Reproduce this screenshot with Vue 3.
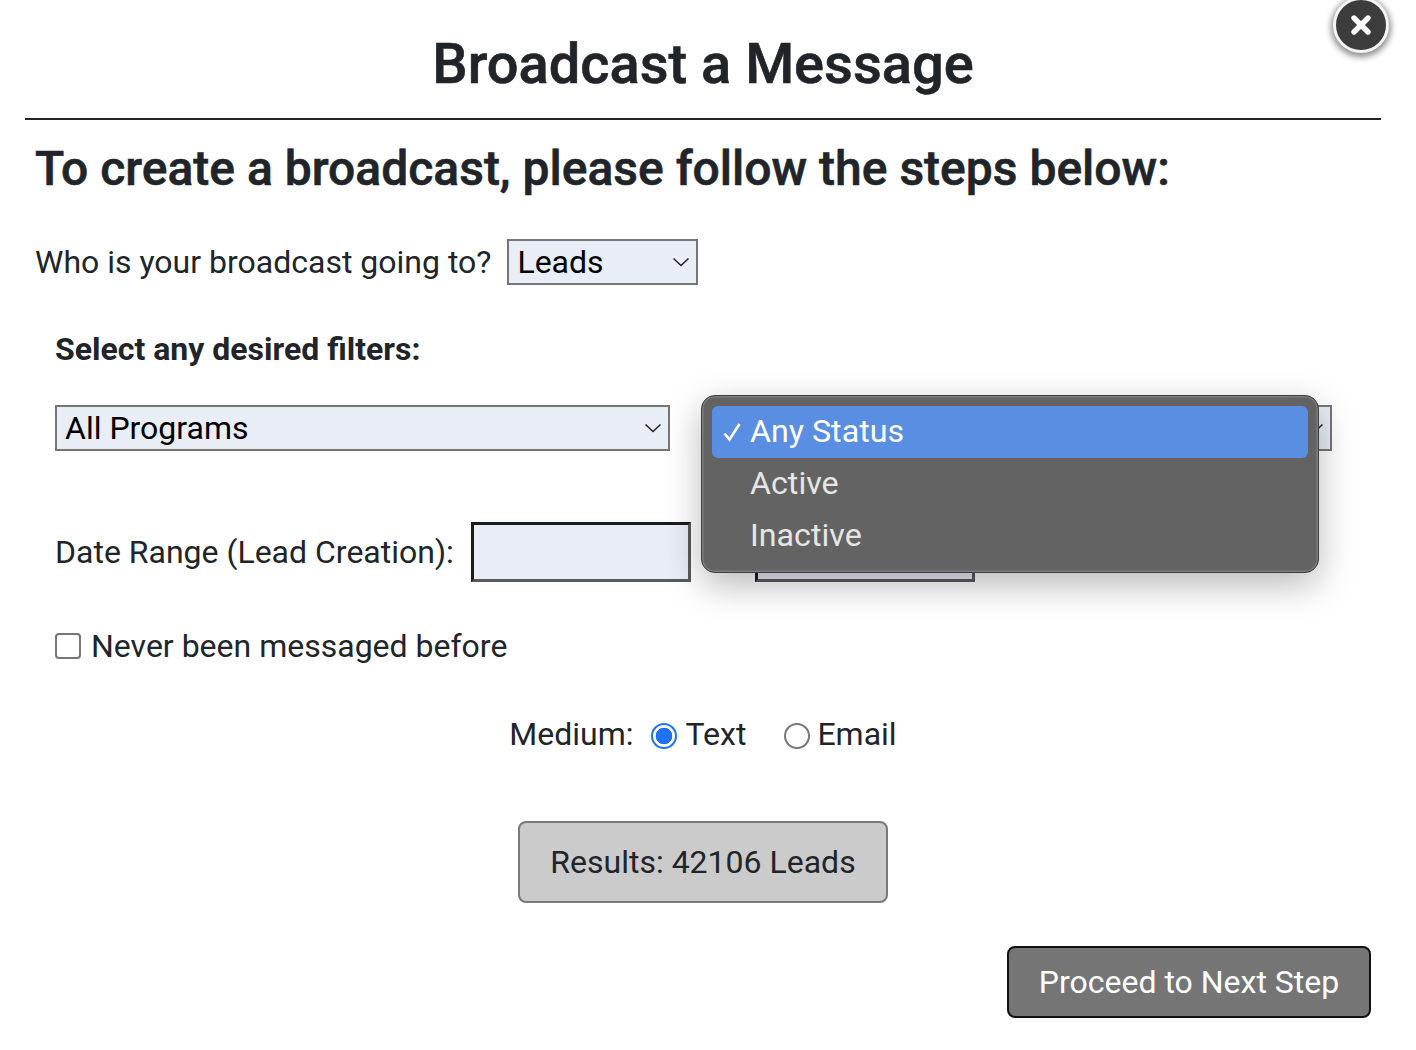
<script setup>
const options = [
  { label: 'Any Status', selected: true },
  { label: 'Active', selected: false },
  { label: 'Inactive', selected: false },
]
</script>

<template>
  <div class="modal">
    <button class="close" aria-label="Close">
      <svg width="26" height="26" viewBox="0 0 26 26">
        <path d="M6 6L20 20M20 6L6 20" stroke="#fff" stroke-width="5.4" stroke-linecap="round" />
      </svg>
    </button>

    <h1 class="title">Broadcast a Message</h1>
    <hr class="rule" />
    <h2 class="subtitle">To create a broadcast, please follow the steps below:</h2>

    <div class="audience">
      <span>Who is your broadcast going to?</span>
      <div class="select select-audience">
        <span>Leads</span>
        <svg class="chevron" width="18" height="10" viewBox="0 0 18 10"><path d="M1.5 1.5L9 8.5L16.5 1.5" fill="none" stroke="#222" stroke-width="1.5" /></svg>
      </div>
    </div>

    <section class="filters">
      <h3 class="filters-title">Select any desired filters:</h3>
      <div class="select-row">
        <div class="select select-program">
          <span>All Programs</span>
          <svg class="chevron" width="18" height="10" viewBox="0 0 18 10"><path d="M1.5 1.5L9 8.5L16.5 1.5" fill="none" stroke="#222" stroke-width="1.5" /></svg>
        </div>
        <div class="select select-status">
          <svg class="chevron" width="18" height="10" viewBox="0 0 18 10"><path d="M1.5 1.5L9 8.5L16.5 1.5" fill="none" stroke="#222" stroke-width="1.5" /></svg>
        </div>
      </div>
      <div class="date-row">
        <span class="date-label">Date Range (Lead Creation):</span>
        <input class="date" type="text" />
        <input class="date date-end" type="text" />
      </div>
      <label class="never">
        <span class="checkbox"></span>
        <span>Never been messaged before</span>
      </label>
    </section>

    <div class="medium">
      <span class="medium-label">Medium:</span>
      <span class="radio radio-on"></span>
      <span class="radio-text">Text</span>
      <span class="radio radio-off"></span>
      <span class="radio-text radio-text-last">Email</span>
    </div>

    <div class="results-wrap">
      <button class="results">Results: 42106 Leads</button>
    </div>
    <div class="next-wrap">
      <button class="next">Proceed to Next Step</button>
    </div>

    <ul class="menu">
      <li v-for="o in options" :key="o.label" class="menu-item" :class="{ active: o.selected }">
        <svg v-if="o.selected" class="tick" width="18" height="20" viewBox="0 0 18 20"><path d="M1.5 11.5L6.5 17.5L16.5 2" fill="none" stroke="#fff" stroke-width="2.6" /></svg>
        {{ o.label }}
      </li>
    </ul>
  </div>
</template>

<style>
html, body { margin: 0; background: #fff; }
</style>

<style scoped>
.modal {
  position: relative;
  box-sizing: border-box;
  width: 1416px;
  height: 1050px;
  padding: 0 35px 0 25px;
  overflow: hidden;
  font-family: Roboto, "Liberation Sans", sans-serif;
  font-size: 32px;
  line-height: 38px;
  color: #212529;
  background: #fff;
}
.close {
  position: absolute;
  top: -3px;
  left: 1333px;
  width: 56px;
  height: 56px;
  padding: 0;
  display: flex;
  align-items: center;
  justify-content: center;
  box-sizing: border-box;
  border: 3px solid #f4f4f4;
  border-radius: 50%;
  background: #3c3c3c;
  box-shadow: 0 2px 6px 2px rgba(0, 0, 0, 0.45);
  filter: blur(0.6px);
}
.title {
  margin: 0;
  padding-top: 32px;
  height: 118px;
  box-sizing: border-box;
  text-align: center;
  font-size: 56px;
  line-height: 64px;
  font-weight: 500;
  -webkit-text-stroke: 0.6px #212529;
  width: 1356px;
}
.rule {
  margin: 0;
  width: 1356px;
  height: 2px;
  border: 0;
  background: #212529;
}
.subtitle {
  margin: 22px 0 0 10px;
  font-size: 48px;
  line-height: 54px;
  font-weight: 500;
  -webkit-text-stroke: 0.6px #212529;
}
.audience {
  margin: 43px 0 0 10px;
  display: flex;
  align-items: center;
  gap: 16px;
}
.select {
  position: relative;
  box-sizing: border-box;
  height: 46px;
  display: flex;
  align-items: center;
  padding-left: 8px;
  border: 2px solid #767676;
  background: #e9edf6;
  color: #000;
}
.chevron {
  position: absolute;
  right: 6px;
  top: 16px;
}
.select-audience { width: 191px; }
.filters {
  margin: 45px 0 0 30px;
}
.filters-title {
  margin: 0;
  font-size: 32px;
  line-height: 38px;
  font-weight: 700;
}
.select-row {
  margin-top: 37px;
  display: flex;
  gap: 47px;
}
.select-program { width: 615px; }
.select-status { width: 615px; }
.date-row {
  margin-top: 71px;
  display: flex;
  align-items: center;
}
.date-label { width: 416px; }
.date {
  box-sizing: border-box;
  width: 220px;
  height: 60px;
  margin: 0;
  padding: 0;
  border: 3px solid;
  border-color: #1c1c1c #5a5a5a #5a5a5a #1c1c1c;
  background: #e9edf6;
}
.date-end { margin-left: 64px; }
.never {
  margin-top: 45px;
  display: flex;
  align-items: center;
  gap: 10px;
}
.checkbox {
  box-sizing: border-box;
  width: 26px;
  height: 26px;
  border: 2px solid #767676;
  border-radius: 4px;
  background: #fff;
}
.medium {
  margin-top: 50px;
  display: flex;
  align-items: center;
  justify-content: center;
  width: 1356px;
}
.medium-label { margin-right: 17px; }
.radio {
  box-sizing: border-box;
  width: 26px;
  height: 26px;
  margin-top: 4px;
  border-radius: 50%;
}
.radio-on {
  border: 2px solid #2072f0;
  background: radial-gradient(circle, #2072f0 0 8px, #fff 8.6px);
}
.radio-off {
  border: 2px solid #767676;
  margin-left: 38px;
}
.radio-text { margin-left: 9px; }
.radio-text-last { margin-left: 7px; }
.results-wrap {
  margin-top: 68px;
  display: flex;
  justify-content: center;
  width: 1356px;
}
.results {
  box-sizing: border-box;
  width: 370px;
  height: 82px;
  font: inherit;
  color: #212529;
  background: #cbcbcb;
  border: 2px solid #7a7a7a;
  border-radius: 8px;
}
.next-wrap {
  margin-top: 43px;
  display: flex;
  justify-content: flex-end;
  width: 1346px;
}
.next {
  box-sizing: border-box;
  width: 364px;
  height: 72px;
  font: inherit;
  color: #fff;
  background: #757575;
  border: 2px solid #111;
  border-radius: 8px;
}
.menu {
  position: absolute;
  top: 395px;
  left: 701px;
  box-sizing: border-box;
  width: 618px;
  height: 178px;
  margin: 0;
  padding: 10px 10px;
  list-style: none;
  border: 1px solid #3e3e3e;
  box-shadow: inset 0 0 0 1.5px #7d7d7d, 0 12px 36px rgba(0, 0, 0, 0.28);
  border-radius: 14px;
  background: #626362;
  font-size: 32.2px;
}
.menu-item {
  position: relative;
  height: 52px;
  line-height: 50px;
  padding-left: 38px;
  border-radius: 6px;
  color: #e6e6e6;
}
.menu-item.active {
  background: #5a8ee2;
  color: #fff;
}
.tick {
  position: absolute;
  left: 11px;
  top: 16px;
}
</style>
